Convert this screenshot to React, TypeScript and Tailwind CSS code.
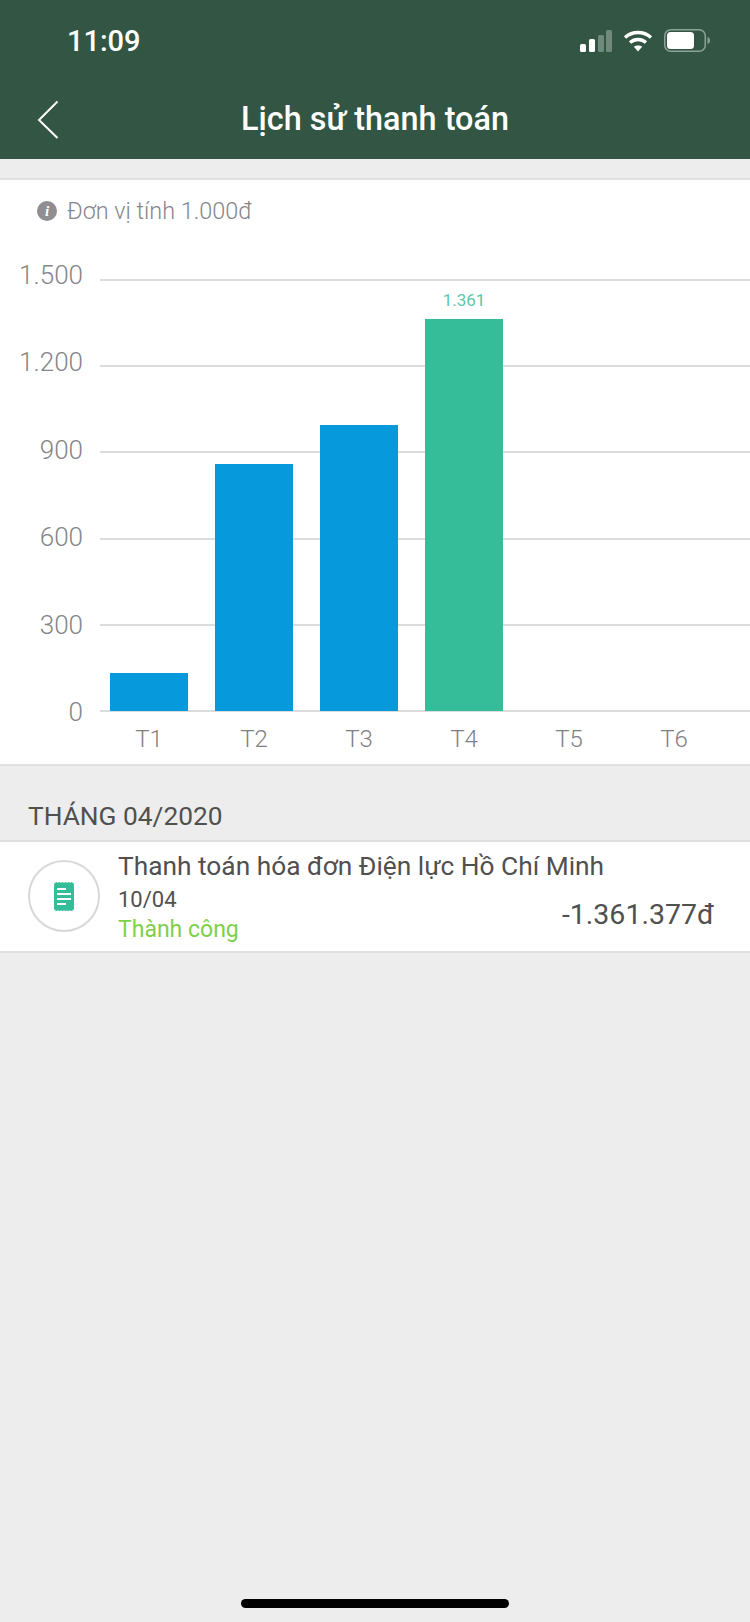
const yLabels = ["1.500", "1.200", "900", "600", "300", "0"];

const months = [
  { label: "T1", height: 38, color: "bg-[#069adc]" },
  { label: "T2", height: 247, color: "bg-[#069adc]" },
  { label: "T3", height: 286, color: "bg-[#069adc]" },
  { label: "T4", height: 392, color: "bg-[#34bd98]", value: "1.361" },
  { label: "T5", height: 0, color: "" },
  { label: "T6", height: 0, color: "" },
];

function StatusIcons() {
  return (
    <div className="mb-[2px] flex items-center">
      <svg width="32" height="22" viewBox="0 0 32 22" className="mr-[11px]">
        <rect x="0" y="14" width="6" height="8" rx="1.5" fill="#fff" />
        <rect x="9" y="9" width="6" height="13" rx="1.5" fill="#fff" />
        <rect x="18" y="5" width="6" height="17" rx="1.5" fill="#fff" fillOpacity="0.3" />
        <rect x="26" y="0" width="6" height="22" rx="1.5" fill="#fff" fillOpacity="0.3" />
      </svg>
      <svg width="30" height="22" viewBox="0 0 30 22" className="mr-[11px]" fill="none" stroke="#fff" strokeWidth="3.4">
        <path d="M2 7.5C9.5 .9 20.5 .9 28 7.5" />
        <path d="M7 12.5C11.8 8.5 18.2 8.5 23 12.5" />
        <path d="M15 21.5L10.8 16.8C13 15 17 15 19.2 16.8Z" fill="#fff" stroke="none" />
      </svg>
      <svg width="46" height="23" viewBox="0 0 46 23" fill="none">
        <rect x="0.75" y="0.75" width="40.5" height="21.5" rx="6" stroke="#fff" strokeOpacity="0.45" strokeWidth="1.5" />
        <rect x="3" y="3" width="27" height="17" rx="3.5" fill="#fff" />
        <path d="M43.5 8C45 8.5 46 9.8 46 11.5C46 13.2 45 14.5 43.5 15Z" fill="#fff" fillOpacity="0.45" />
      </svg>
    </div>
  );
}

function ReceiptIcon() {
  return (
    <svg width="20" height="29" viewBox="0 0 20 29">
      <rect x="0" y="1" width="20" height="27" rx="1.5" fill="#34bd98" />
      <path
        d="M1 1.5a1.5 1.5 0 0 1 3 0a1.5 1.5 0 0 1 3 0a1.5 1.5 0 0 1 3 0a1.5 1.5 0 0 1 3 0a1.5 1.5 0 0 1 3 0a1.5 1.5 0 0 1 3 0ZM1 27.5a1.5 1.5 0 0 0 3 0a1.5 1.5 0 0 0 3 0a1.5 1.5 0 0 0 3 0a1.5 1.5 0 0 0 3 0a1.5 1.5 0 0 0 3 0a1.5 1.5 0 0 0 3 0Z"
        fill="#34bd98"
      />
      <g fill="#fff">
        <rect x="3" y="6" width="9" height="2" />
        <rect x="3" y="11" width="14" height="2" />
        <rect x="3" y="16" width="14" height="2" />
        <rect x="3" y="21" width="9" height="2" />
      </g>
    </svg>
  );
}

function Chart() {
  return (
    <div className="relative mt-[55px] h-[472px]">
      {/* axis labels and grid lines */}
      <div className="flex items-start">
        <div className="-mt-[19px] flex h-[467px] w-[83px] shrink-0 flex-col justify-between text-right text-[26px] leading-[30px] font-light text-[#85858a]">
          {yLabels.map((label) => (
            <span key={label}>{label}</span>
          ))}
        </div>
        <div className="ml-[17px] flex h-[433px] flex-1 flex-col justify-between">
          {yLabels.map((label) => (
            <div key={label} className="h-[2px] bg-[#dcdcdf]" />
          ))}
        </div>
      </div>
      {/* bars sit on top of the grid */}
      <div className="absolute top-0 left-[110px] flex h-[472px] gap-[27px]">
        {months.map((m) => (
          <div key={m.label} className="flex w-[78px] flex-col items-center justify-end">
            {m.value && <span className="mb-[9px] text-[17px] leading-[20px] text-[#5cc7aa]">{m.value}</span>}
            <div className={`w-full ${m.color}`} style={{ height: m.height }} />
            <span className="mt-[16px] h-[24px] text-[24px] leading-[24px] font-light text-[#7f7f84]">{m.label}</span>
          </div>
        ))}
      </div>
    </div>
  );
}

export default function App() {
  return (
    <div className="flex h-[1622px] w-[750px] flex-col overflow-hidden bg-[#ededed] font-['Roboto',sans-serif]">
      <header className="h-[159px] shrink-0 bg-[#325643] text-white">
        <div className="flex h-[82px] items-center justify-between pt-[1px] pr-[40px] pl-[67px]">
          <span className="text-[29px] leading-none font-medium">11:09</span>
          <StatusIcons />
        </div>
        <div className="relative flex h-[77px] items-center justify-center pb-[2px]">
          <svg width="24" height="40" viewBox="0 0 24 40" fill="none" className="absolute top-[18px] left-[37px]">
            <path d="M20.5 1.5L2 20L20.5 38" stroke="#fff" strokeWidth="2" />
          </svg>
          <h1 className="text-[32.4px] font-medium">Lịch sử thanh toán</h1>
        </div>
      </header>

      <section className="mt-[19px] h-[588px] shrink-0 border-y-2 border-[#dfdfdf] bg-white">
        <div className="flex items-center pt-[18px] pl-[37px]">
          <span className="flex h-[20px] w-[20px] items-center justify-center rounded-full bg-[#8e8e93] font-['Liberation_Serif',serif] text-[15px] leading-none font-bold text-white italic">
            i
          </span>
          <span className="ml-[10px] text-[23.4px] leading-[26px] font-light text-[#85858a]">Đơn vị tính 1.000đ</span>
        </div>
        <Chart />
      </section>

      <h2 className="mt-[34px] mb-[8px] pl-[28px] text-[26.3px] leading-[32px] text-[#505050]">THÁNG 04/2020</h2>

      <section className="flex h-[113px] shrink-0 border-y-2 border-[#dfdfdf] bg-white pr-[36px]">
        <div className="mt-[18px] ml-[28px] flex h-[72px] w-[72px] shrink-0 items-center justify-center rounded-full border-2 border-[#d8d8d8]">
          <ReceiptIcon />
        </div>
        <div className="ml-[18px] flex-1 pt-[8px]">
          <p className="text-[26.3px] leading-[32px] text-[#505050]">Thanh toán hóa đơn Điện lực Hồ Chí Minh</p>
          <div className="flex items-end justify-between">
            <div>
              <p className="mt-[3px] text-[22px] leading-[30px] text-[#505050]">10/04</p>
              <p className="text-[23px] leading-[30px] text-[#7ed04b]">Thành công</p>
            </div>
            <p className="mb-[12px] text-[28.5px] leading-[36px] text-[#505050]">-1.361.377đ</p>
          </div>
        </div>
      </section>

      <div className="mt-auto mb-[14px] h-[9px] w-[268px] self-center rounded-full bg-black" />
    </div>
  );
}
